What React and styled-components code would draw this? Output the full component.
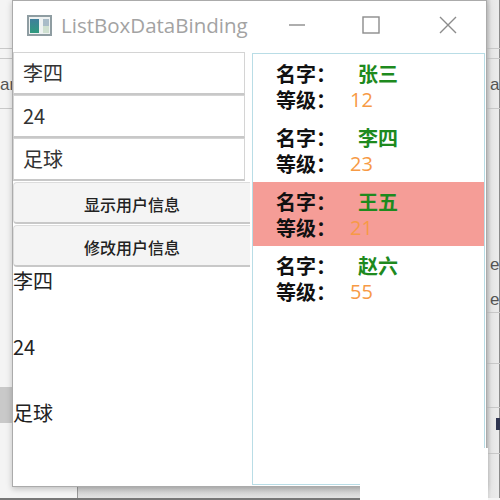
import React from "react";
import styled, { createGlobalStyle } from "styled-components";

const Global = createGlobalStyle`
    html, body {
        margin: 0;
        padding: 0;
    }

    body {
        width: 500px;
        height: 500px;
        overflow: hidden;
        background: #f4f4f4;
    }
`;

const Desktop = styled.div`
    position: relative;
    width: 500px;
    height: 500px;
    overflow: hidden;
    background: #f4f4f4;
    font-family: "Noto Sans CJK SC", "Liberation Sans", sans-serif;
`;

const RightStrip = styled.div`
    position: absolute;
    left: 487px;
    top: 0;
    width: 12px;
    height: 498px;
    background: linear-gradient(90deg, #cfcfcf, #e6e6e6 35%, #ececec);
    border-right: 1px solid #8a8a8a;
`;

const BackLine = styled.div`
    position: absolute;
    top: ${(p) => p.$top}px;
    left: ${(p) => p.$left}px;
    width: ${(p) => p.$width}px;
    height: 1px;
    background: #c9c9c9;
`;

const BackText = styled.span`
    position: absolute;
    top: ${(p) => p.$top}px;
    left: ${(p) => p.$left}px;
    font: 17px "Liberation Sans", sans-serif;
    color: #555;
`;

const BackBlock = styled.div`
    position: absolute;
    left: 0;
    top: 387px;
    width: 12px;
    height: 36px;
    background: #c9c9c9;
`;

const DarkTick = styled.div`
    position: absolute;
    left: 496px;
    top: 418px;
    width: 4px;
    height: 12px;
    background: #2f3550;
`;

const BottomBar = styled.div`
    position: absolute;
    left: 77px;
    top: 487px;
    width: 283px;
    height: 11px;
    background: linear-gradient(180deg, #cdcdcd, #e2e2e2);
    border-left: 1px solid #999;
`;

const BottomEdge = styled.div`
    position: absolute;
    left: 0;
    top: 498px;
    width: 400px;
    height: 2px;
    background: #777;
`;

const CornerPatch = styled.div`
    position: absolute;
    left: 360px;
    top: 484px;
    width: 128px;
    height: 16px;
    background: #fff;
`;

const SidePatch = styled.div`
    position: absolute;
    left: 483px;
    top: 448px;
    width: 5px;
    height: 36px;
    background: #fff;
`;

const Window = styled.div`
    position: absolute;
    left: 12px;
    top: 0;
    box-sizing: border-box;
    width: 475px;
    height: 487px;
    display: flex;
    flex-direction: column;
    background: #fff;
    border: 1px solid #ababab;
    box-shadow: 0 2px 6px rgba(0, 0, 0, 0.22);
`;

const TitleBar = styled.div`
    height: 51px;
    box-sizing: border-box;
    padding: 0 0 3px 14px;
    flex: none;
    display: flex;
    align-items: center;
`;

const AppIcon = styled.svg`
    width: 25px;
    height: 21px;
    flex: none;
`;

const Title = styled.div`
    margin-left: 9px;
    font: 20.5px "Open Sans", "Liberation Sans", sans-serif;
    color: #a3a3a3;
`;

const Controls = styled.div`
    margin-left: auto;
    display: flex;
    align-items: center;
    padding-right: 27px;
    gap: 54px;
`;

const ControlIcon = styled.svg`
    width: 22px;
    height: 22px;
    display: block;
    stroke: #8c8c8c;
    stroke-width: 1.4;
    fill: none;
`;

const Body = styled.div`
    flex: 1;
    display: flex;
    align-items: flex-start;
    min-height: 0;
`;

const LeftColumn = styled.div`
    width: 238px;
    flex: none;
    display: flex;
    flex-direction: column;
`;

const Field = styled.div`
    box-sizing: border-box;
    width: 232px;
    height: 43px;
    padding: 0 0 2px 9px;
    display: flex;
    align-items: center;
    font-size: 20px;
    color: #333;
    background: #fff;
    border: 1px solid #d4d4d4;
    border-bottom: 2px solid #c8c8c8;
`;

const ActionButton = styled.div`
    box-sizing: border-box;
    width: 237px;
    height: 42px;
    margin-top: 1px;
    padding-top: 3px;
    display: flex;
    align-items: center;
    justify-content: center;
    font-size: 16px;
    font-weight: 500;
    color: #222;
    background: #f4f4f4;
    border-top: 1px solid #dcdcdc;
    border-left: 1px solid #dcdcdc;
    border-bottom: 2px solid #c8c8c8;
    border-radius: 4px 0 0 4px;
`;

const Readout = styled.div`
    height: 66px;
    font-size: 20px;
    line-height: 28px;
    color: #222;
`;

const ListBox = styled.div`
    box-sizing: border-box;
    width: 233px;
    margin-left: 1px;
    margin-top: 1px;
    height: 432px;
    border: 1px solid #b9dde6;
`;

const Item = styled.div`
    height: 64px;
    box-sizing: border-box;
    padding: 7px 0 0 23px;
    background: ${(p) => (p.$selected ? "#f59d97" : "transparent")};
`;

const ItemRow = styled.div`
    display: flex;
    height: 25.5px;
    align-items: center;
    font-size: 20px;
    line-height: 25px;
`;

const Label = styled.span`
    width: ${(p) => p.$width}px;
    flex: none;
    font-weight: 700;
    color: #111;
`;

const Name = styled.span`
    font-weight: 700;
    color: #1e8a1e;
`;

const Age = styled.span`
    font-family: "Open Sans", "Liberation Sans", sans-serif;
    color: #f79a45;
`;

const people = [
    { name: "张三", age: 12 },
    { name: "李四", age: 23 },
    { name: "王五", age: 21, selected: true },
    { name: "赵六", age: 55 },
];

export default function App() {
    return (
        <Desktop>
            <Global />

            <RightStrip />
            <BackLine $top={48} $left={0} $width={500} />
            <BackLine $top={58} $left={0} $width={500} />
            <BackLine $top={108} $left={0} $width={500} />
            <BackLine $top={312} $left={487} $width={13} />
            <BackLine $top={363} $left={487} $width={13} />
            <BackLine $top={407} $left={487} $width={13} />
            <BackLine $top={453} $left={487} $width={13} />
            <BackText $top={75} $left={0}>ar</BackText>
            <BackText $top={75} $left={490}>a</BackText>
            <BackText $top={255} $left={490}>e</BackText>
            <BackText $top={290} $left={490}>e</BackText>
            <BackBlock />
            <DarkTick />
            <BottomBar />
            <BottomEdge />

            <Window>
                <TitleBar>
                    <AppIcon viewBox="0 0 25 21">
                        <defs>
                            <linearGradient id="pane" x1="0" y1="0" x2="0" y2="1">
                                <stop offset="0" stopColor="#3f7f9c" />
                                <stop offset="1" stopColor="#2f9a7e" />
                            </linearGradient>
                        </defs>
                        <rect x="1" y="1" width="23" height="19" fill="#eef2f2" stroke="#8f9da2" strokeWidth="2" />
                        <rect x="3" y="4" width="9" height="14" fill="url(#pane)" />
                        <rect x="16" y="4" width="6" height="7" fill="#a9bcc8" />
                        <rect x="16" y="11" width="6" height="7" fill="#cfe0d0" />
                    </AppIcon>
                    <Title>ListBoxDataBinding</Title>
                    <Controls>
                        <ControlIcon viewBox="0 0 22 22">
                            <path d="M4 11h16" />
                        </ControlIcon>
                        <ControlIcon viewBox="0 0 22 22">
                            <rect x="2" y="3" width="16" height="16" />
                        </ControlIcon>
                        <ControlIcon viewBox="0 0 22 22">
                            <path d="M3 3l16 16M19 3L3 19" />
                        </ControlIcon>
                    </Controls>
                </TitleBar>

                <Body>
                    <LeftColumn>
                        <Field>李四</Field>
                        <Field>24</Field>
                        <Field>足球</Field>
                        <ActionButton>显示用户信息</ActionButton>
                        <ActionButton>修改用户信息</ActionButton>
                        <Readout>李四</Readout>
                        <Readout>24</Readout>
                        <Readout>足球</Readout>
                    </LeftColumn>

                    <ListBox>
                        {people.map((person) => (
                            <Item key={person.name} $selected={person.selected}>
                                <ItemRow>
                                    <Label $width={82}>名字：</Label>
                                    <Name>{person.name}</Name>
                                </ItemRow>
                                <ItemRow>
                                    <Label $width={74}>等级：</Label>
                                    <Age>{person.age}</Age>
                                </ItemRow>
                            </Item>
                        ))}
                    </ListBox>
                </Body>
            </Window>

            <SidePatch />
            <CornerPatch />
        </Desktop>
    );
}
